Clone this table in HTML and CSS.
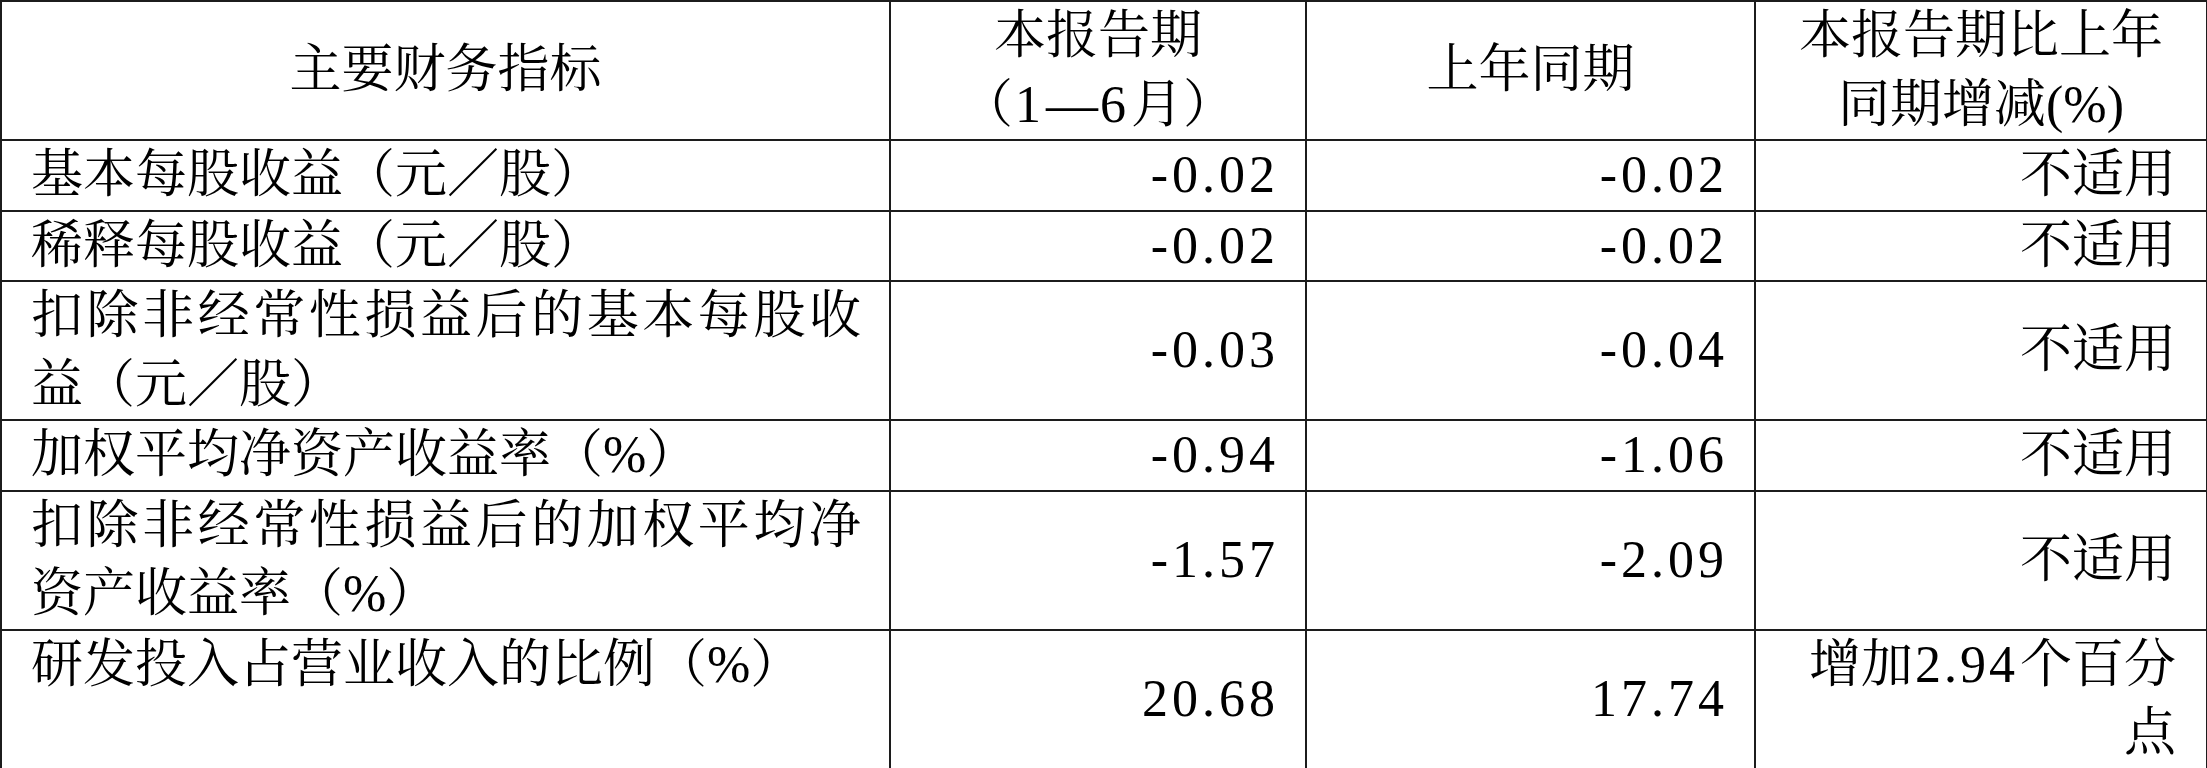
FILE: index.html
```html
<!DOCTYPE html>
<html lang="zh-CN">
<head>
<meta charset="utf-8">
<title>主要财务指标</title>
<link rel="stylesheet" href="styles.css">
</head>
<body>
<table class="fin">
  <colgroup>
    <col class="c-name">
    <col class="c-cur">
    <col class="c-prev">
    <col class="c-chg">
  </colgroup>
  <thead>
    <tr>
      <th class="h-mid">主要财务指标</th>
      <th>本报告期<br>（<span class="digits">1</span>—<span class="digits">6</span>月）</th>
      <th class="h-mid">上年同期</th>
      <th>本报告期比上年<br>同期增减(%)</th>
    </tr>
  </thead>
  <tbody>
    <tr>
      <td class="name">基本每股收益（元／股）</td>
      <td class="num">-0.02</td>
      <td class="num">-0.02</td>
      <td class="chg">不适用</td>
    </tr>
    <tr>
      <td class="name">稀释每股收益（元／股）</td>
      <td class="num">-0.02</td>
      <td class="num">-0.02</td>
      <td class="chg">不适用</td>
    </tr>
    <tr>
      <td class="name">扣除非经常性损益后的基本每股收益（元／股）</td>
      <td class="num">-0.03</td>
      <td class="num">-0.04</td>
      <td class="chg">不适用</td>
    </tr>
    <tr>
      <td class="name">加权平均净资产收益率（%）</td>
      <td class="num">-0.94</td>
      <td class="num">-1.06</td>
      <td class="chg">不适用</td>
    </tr>
    <tr>
      <td class="name">扣除非经常性损益后的加权平均净资产收益率（%）</td>
      <td class="num">-1.57</td>
      <td class="num">-2.09</td>
      <td class="chg">不适用</td>
    </tr>
    <tr>
      <td class="name">研发投入占营业收入的比例（%）</td>
      <td class="num">20.68</td>
      <td class="num">17.74</td>
      <td class="chg">增加<span class="digits">2.94</span>个百分<br>点</td>
    </tr>
  </tbody>
</table>
</body>
</html>
```

FILE: styles.css
```css
html, body {
  margin: 0;
  padding: 0;
  background: #ffffff;
}

body {
  font-family: "Liberation Serif", "Noto Serif CJK SC", "Source Han Serif SC", "Noto Sans CJK SC", serif;
  font-size: 52px;
  line-height: 68.5px;
  color: #000000;
}

.fin {
  border-collapse: collapse;
  table-layout: fixed;
  width: 2206px;
}

.c-name { width: 889px; }
.c-cur  { width: 416px; }
.c-prev { width: 449px; }
.c-chg  { width: 452px; }

.fin th,
.fin td {
  border: 2px solid #1c1c1c;
  padding: 0 30px;
  font-weight: normal;
}

.fin th {
  text-align: center;
  vertical-align: middle;
}

.fin td.name {
  padding: 0 28px 0 29px;
  text-align: justify;
  vertical-align: top;
}

.fin td.num {
  text-align: right;
  vertical-align: middle;
  padding-right: 26px;
  letter-spacing: 4px;
}

.fin td.chg {
  text-align: right;
  vertical-align: middle;
  padding-right: 30px;
}

.digits {
  letter-spacing: 3px;
  margin: 0 2px;
}
```
